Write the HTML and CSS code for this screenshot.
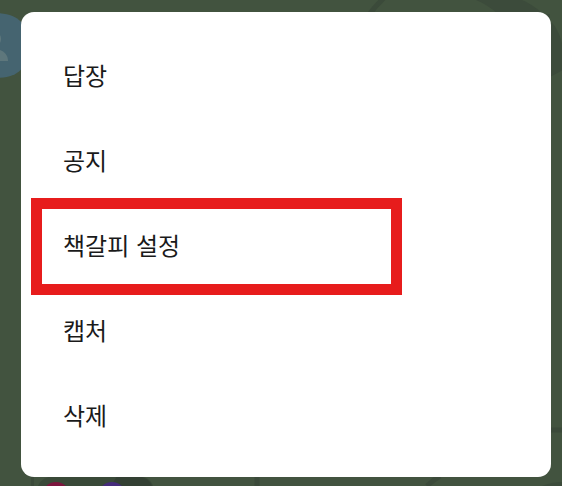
FILE: index.html
```html
<!DOCTYPE html>
<html lang="ko">

<head>
    <meta charset="UTF-8">
    <meta name="viewport" content="width=device-width, initial-scale=1.0">
    <title>메시지 메뉴</title>

    <link rel="stylesheet" href="styles.css">
</head>

<body>
    <!-- dimmed chat room behind the menu -->
    <svg class="chat-bg" viewBox="0 0 562 486" preserveAspectRatio="xMidYMid slice" aria-hidden="true">
        <path d="M368 16Q376 5 386 -4" fill="none" stroke="#3b4a3a" stroke-width="5" />
        <path d="M476 0H522Q532 4 542 13L554 25Q563 38 563 54V70L550 77V14H498Q488 5 476 0Z" fill="#3c4b3b" />
        <path d="M550 430H562M257 476V486M427 486Q433 480 440 476" fill="none" stroke="#3b4a3a" stroke-width="5" />
        <path d="M542 486Q552 482 562 482V486Z" fill="#3c4b3b" />

        <path d="M-6 13C17 13 28 22 28 46S17 78 -6 78Z" fill="#456470" />
        <circle cx="-7" cy="39" r="8" fill="#5e777c" />
        <path d="M-20 61C-20 45 8 45 8 61Z" fill="#5e777c" />

        <path d="M31 476H34V486H31Z" fill="#3b4a3a" />
        <path d="M38 486Q42 476 56 476H136Q150 476 153 486Z" fill="#394938" />
        <path d="M117 476H136Q149 477 152 486H111Z" fill="#334033" />
        <circle cx="56" cy="496" r="14" fill="#7c153d" />
        <circle cx="112" cy="496" r="14" fill="#452b7b" />
    </svg>

    <main class="menu">
        <button type="button" class="menu-item">답장</button>
        <button type="button" class="menu-item">공지</button>
        <button type="button" class="menu-item is-marked">책갈피 설정</button>
        <button type="button" class="menu-item">캡처</button>
        <button type="button" class="menu-item">삭제</button>
    </main>
</body>

</html>
```
FILE: styles.css
```css
*,
*::after {
    box-sizing: border-box;
}

body {
    margin: 0;
    padding: 12px 11px 9px 21px;
    min-height: 100vh;
    background-color: #42533f;
    font-family: "Noto Sans CJK KR", sans-serif;
}

.chat-bg {
    position: absolute;
    top: 0;
    left: 0;
    width: 100%;
    height: 100%;
}

.menu {
    position: relative;
    display: flex;
    flex-direction: column;
    padding: 22px 0 18px;
    background: #ffffff;
    border-radius: 13px;
}

.menu-item {
    height: 85px;
    padding: 0 42px 4px;
    border: 0;
    background: transparent;
    color: #1a1a1a;
    font-family: inherit;
    font-size: 24px;
    line-height: 36px;
    text-align: left;
    cursor: pointer;
}

.menu-item.is-marked {
    position: relative;
}

/* red frame, drawn a little taller than the row */
.menu-item.is-marked::after {
    content: "";
    position: absolute;
    top: -6px;
    bottom: -6px;
    left: 10px;
    width: 70%;
    border: 11px solid #e71c1c;
}
```
